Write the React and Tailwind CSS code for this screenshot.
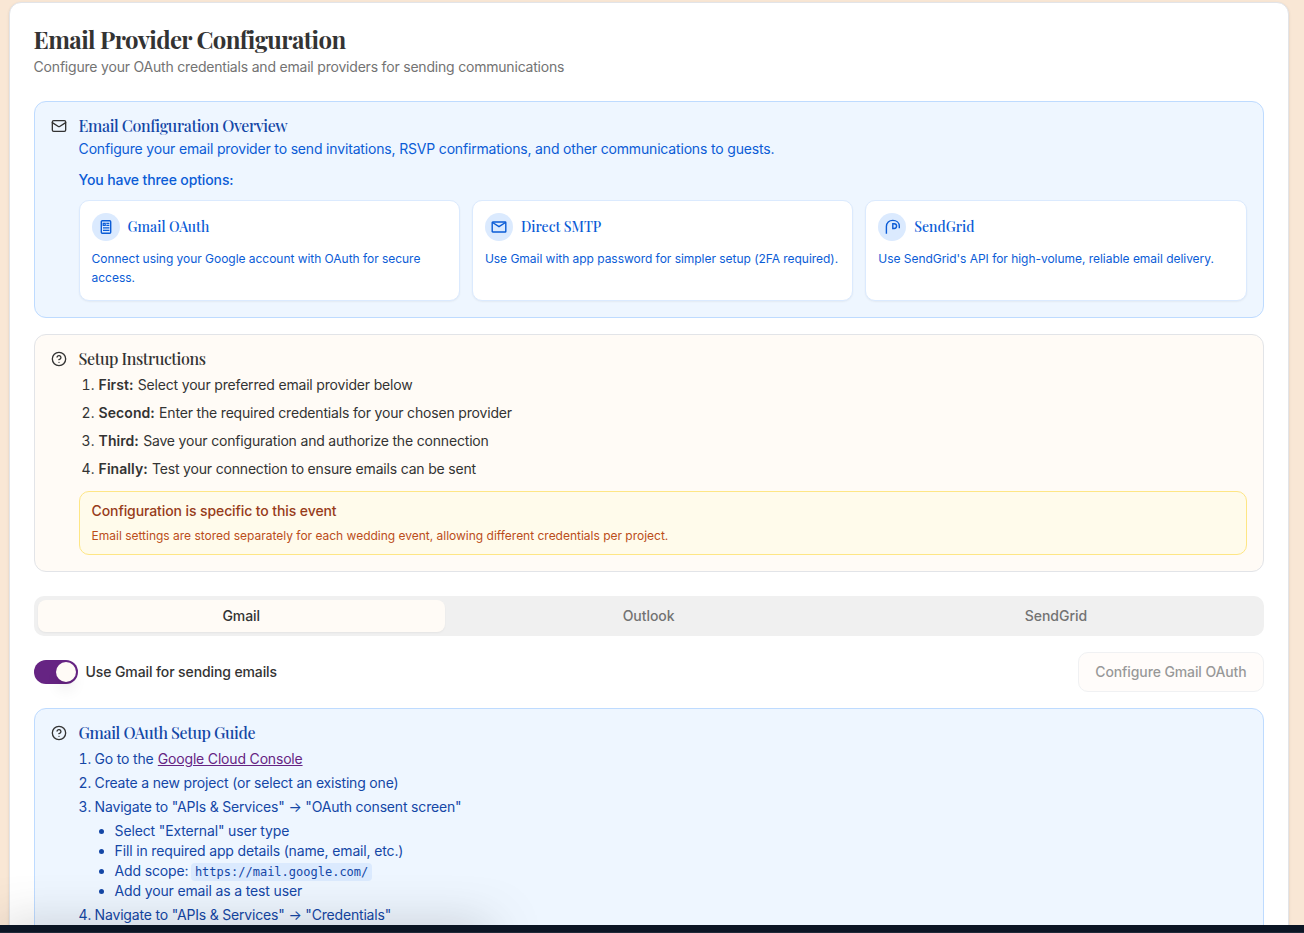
import { Mail, CircleHelp } from "lucide-react";

const serif = "font-['Playfair_Display','Liberation_Serif',serif]";

function DocIcon() {
  return (
    <svg width="16" height="16" viewBox="0 0 16 16" fill="none" stroke="#0b5cd6" strokeWidth="1.4">
      <rect x="3.3" y="1.8" width="9.4" height="12.4" rx="1" />
      <path d="M5.2 4.3h2v2h-2zM8.3 4.3h3M8.3 6.4h3M5 8.8h6.4M5 11.4h6.4" strokeWidth="1.2" />
    </svg>
  );
}

function EnvelopeIcon() {
  return (
    <svg width="16" height="16" viewBox="0 0 16 16" fill="none" stroke="#0b5cd6" strokeWidth="1.4">
      <rect x="1.2" y="3" width="13.6" height="10" rx="0.6" />
      <path d="M1.5 3.5 8 7.6l6.5-4.1" />
    </svg>
  );
}

function GridIcon() {
  return (
    <svg width="16" height="16" viewBox="0 0 16 16" fill="none" stroke="#0b5cd6" strokeWidth="1.4">
      <path d="M2.4 14.8V7.6C2.4 3.6 5.200 1.400 8.800 1.400c3.700 0 6.500 2.200 6.500 5.800v2" />
      <path d="M8.800 4.700h1.400a2.400 2.400 0 0 1 0 4.800H8.800z" strokeWidth="1.400" />
    </svg>
  );
}

function Option({ icon, title, children }) {
  return (
    <div className="h-[101px] rounded-[10px] border border-[#dbeafe] bg-white p-3 shadow-xs">
      <div className="flex items-center gap-2">
        <span className="flex size-7 items-center justify-center rounded-full bg-[#dbeafe]">{icon}</span>
        <h3 className={`${serif} text-[14px] leading-5 font-medium tracking-normal text-[#0b5cd6]`}>{title}</h3>
      </div>
      <p className="mt-2 text-[12px] leading-[19px] tracking-[-0.035px] text-[#0b5cd6]">{children}</p>
    </div>
  );
}

function Step({ n, label, children }) {
  return (
    <li className="flex h-5 items-center">
      <span className="w-5 pl-[3px] tracking-normal tabular-nums">{n}.</span>
      <span><b className="mr-[0.5px] font-semibold tracking-[0.06px]">{label}</b> {children}</span>
    </li>
  );
}

function Guide({ n, children }) {
  return (
    <li className="flex h-5 items-center whitespace-pre"><span className="w-4 tracking-[-0.3px] tabular-nums">{n}.</span><span>{children}</span></li>
  );
}

function Bullet({ children }) {
  return (
    <li className="flex h-5 items-center tracking-[-0.15px]"><span className="mr-[11px] size-[5px] rounded-full bg-[#1447a6]" />{children}</li>
  );
}

export default function App() {
  return (
    <div className="relative flex h-[933px] flex-col overflow-hidden bg-[#f9e7d5] font-['Inter',sans-serif] text-[14px] leading-5 tracking-[-0.18px] text-[#333]">
      <div className="min-h-0 flex-1 overflow-hidden pt-[2px] pr-[15.4px] pl-[8.6px]">
        <main className="h-[1100px] rounded-xl border border-[#e2e4e8] bg-white px-6 pt-6 shadow-sm">
          <h1 className={`${serif} text-[24px] leading-6 font-bold tracking-[-0.6px]`}>Email Provider Configuration</h1>
          <p className="mt-1.5 tracking-[-0.2px] text-[#737373]">Configure your OAuth credentials and email providers for sending communications</p>

          <section className="mt-6 flex h-[217px] gap-3 rounded-xl border border-[#bedbff] bg-[#eef6ff] p-4">
            <Mail size={16} className="shrink-0" />
            <div className="min-w-0 flex-1">
              <h2 className={`${serif} text-[16px] leading-4 font-medium tracking-[-0.4px] text-[#1447a6]`}>Email Configuration Overview</h2>
              <p className="mt-[5px] tracking-[-0.17px] text-[#0b5cd6]">Configure your email provider to send invitations, RSVP confirmations, and other communications to guests.</p>
              <p className="mt-[11px] font-medium tracking-[-0.12px] text-[#0b5cd6]">You have three options:</p>
              <div className="mt-[10px] grid grid-cols-3 gap-3">
                <Option icon={<DocIcon />} title="Gmail OAuth">Connect using your Google account with OAuth for secure access.</Option>
                <Option icon={<EnvelopeIcon />} title="Direct SMTP">Use Gmail with app password for simpler setup (2FA required).</Option>
                <Option icon={<GridIcon />} title="SendGrid">Use SendGrid's API for high-volume, reliable email delivery.</Option>
              </div>
            </div>
          </section>

          <section className="mt-4 flex h-[238px] gap-3 rounded-xl border border-[#e2e4e8] bg-[#fffbf6] p-4">
            <CircleHelp size={16} className="shrink-0" />
            <div className="min-w-0 flex-1">
              <h2 className={`${serif} text-[16px] leading-4 font-medium tracking-[-0.4px]`}>Setup Instructions</h2>
              <ol className="mt-2 flex flex-col gap-2">
                <Step n="1" label="First:">Select your preferred email provider below</Step>
                <Step n="2" label="Second:">Enter the required credentials for your chosen provider</Step>
                <Step n="3" label="Third:">Save your configuration and authorize the connection</Step>
                <Step n="4" label="Finally:">Test your connection to ensure emails can be sent</Step>
              </ol>
              <div className="mt-3 h-16 rounded-[10px] border border-[#fee685] bg-[#fffbeb] px-3 pt-[9px]">
                <p className="font-medium tracking-[-0.1px] text-[#973c1a]">Configuration is specific to this event</p>
                <p className="mt-[5px] text-[12px] tracking-[-0.01px] text-[#bb4d1a]">Email settings are stored separately for each wedding event, allowing different credentials per project.</p>
              </div>
            </div>
          </section>

          <div className="mt-6 grid h-10 grid-cols-3 rounded-[10px] bg-[#f0f0f0] p-1 text-center font-medium tracking-[-0.05px] text-[#737373]">
            <button className="rounded-lg bg-[#fffbf6] text-[#333] shadow-xs">Gmail</button>
            <button>Outlook</button>
            <button>SendGrid</button>
          </div>

          <div className="mt-4 flex h-10 items-center justify-between tracking-[-0.11px]">
            <div className="flex items-center gap-2 font-medium">
              <span className="flex h-6 w-11 items-center justify-end rounded-full bg-[#662483] p-0.5">
                <span className="size-5 rounded-full bg-[#fffbf6] shadow-lg" />
              </span>
              Use Gmail for sending emails
            </div>
            <button className="h-10 rounded-[10px] border border-[#e2e4e8] bg-[#fffbf6] px-4 font-medium opacity-50">Configure Gmail OAuth</button>
          </div>

          <section className="mt-4 flex h-[400px] gap-3 rounded-xl border border-[#bedbff] bg-[#eef6ff] p-4">
            <CircleHelp size={16} className="shrink-0" />
            <div className="text-[#1447a6]">
              <h2 className={`${serif} text-[16px] leading-4 font-medium tracking-[-0.4px]`}>Gmail OAuth Setup Guide</h2>
              <ol className="mt-2 flex flex-col gap-1">
                <Guide n="1">Go to the <a className="ml-[0.5px] text-[#662483] underline">Google Cloud Console</a></Guide>
                <Guide n="2">Create a new project (or select an existing one)</Guide>
                <Guide n="3">Navigate to "APIs &amp; Services" → "OAuth consent screen"</Guide>
                <li>
                  <ul className="pl-5">
                    <Bullet>Select "External" user type</Bullet>
                    <Bullet>Fill in required app details (name, email, etc.)</Bullet>
                    <Bullet>Add scope: <code className="mt-0.5 ml-[2.5px] rounded bg-[#dbeafe] px-1 py-px font-['DejaVu_Sans_Mono',monospace] text-[12px] leading-4 tracking-normal">https://mail.google.com/</code></Bullet>
                    <Bullet>Add your email as a test user</Bullet>
                  </ul>
                </li>
                <Guide n="4">Navigate to "APIs &amp; Services" → "Credentials"</Guide>
              </ol>
            </div>
          </section>
        </main>
      </div>
      <div className="absolute bottom-0 left-0 h-2 w-[490px] shadow-[0_10px_50px_rgba(0,0,0,0.7)]" />
      <footer className="relative h-2 shrink-0 border-b border-[#1e2939] bg-[#0b1524]" />
    </div>
  );
}
